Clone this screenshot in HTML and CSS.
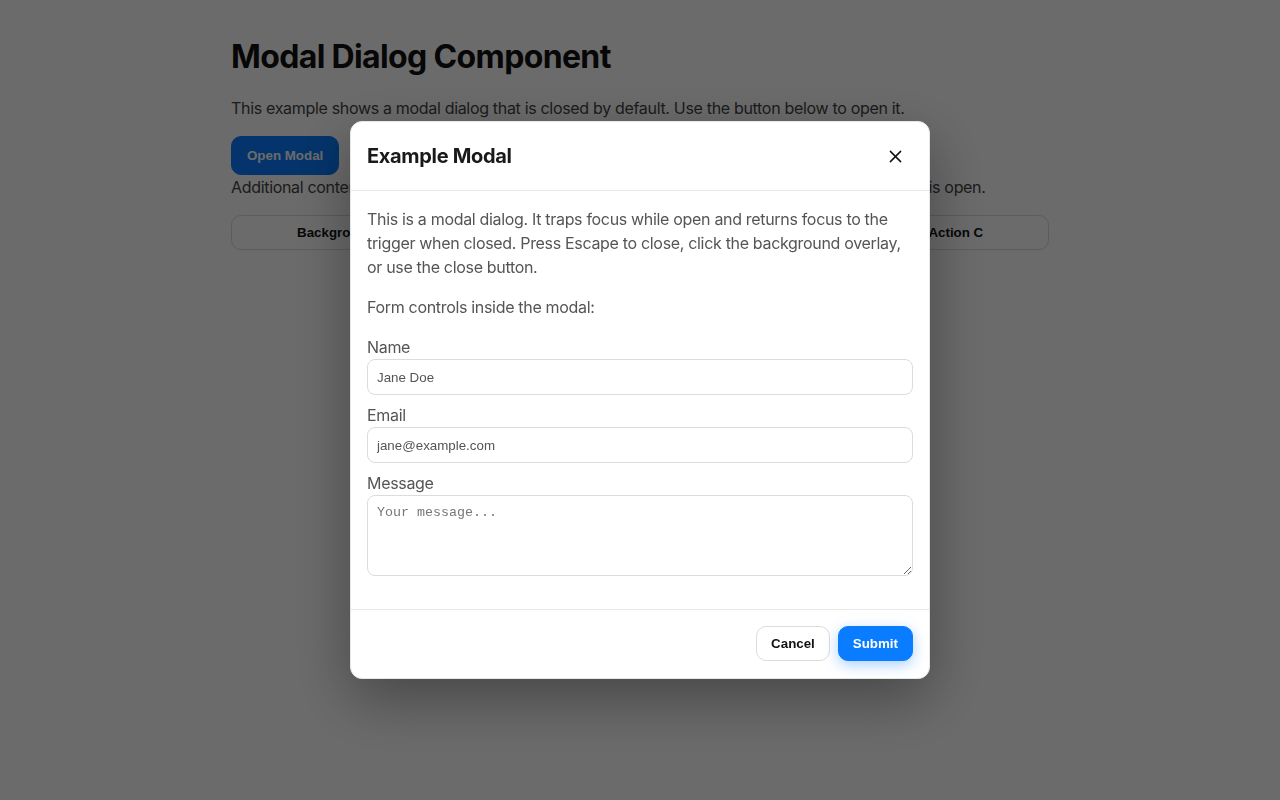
FILE: index.html
```html
<!DOCTYPE html>
<html lang="en">
<head>
<meta charset="utf-8">
<title>Modal Dialog Component</title>
<link rel="stylesheet" href="styles.css">
</head>
<body>
<main class="page">
  <h1 class="page-title">Modal Dialog Component</h1>
  <p class="intro">This example shows a modal dialog that is closed by default. Use the button below to open it.</p>
  <button class="btn btn-primary btn-open" type="button">Open Modal</button>
  <p class="after">Additional content behind the modal. The buttons below shouldn't be reachable while the modal is open.</p>
  <div class="bg-actions">
    <button class="btn bg-btn" type="button">Background Action A</button>
    <button class="btn bg-btn" type="button">Background Action B</button>
    <button class="btn bg-btn" type="button">Background Action C</button>
  </div>
</main>

<div class="overlay">
  <div class="modal" role="dialog" aria-modal="true" aria-labelledby="modal-title">
    <header class="modal-header">
      <h2 class="modal-title" id="modal-title">Example Modal</h2>
      <button class="close-btn" type="button" aria-label="Close">
        <svg width="14" height="14" viewBox="0 0 14 14" aria-hidden="true"><path d="M1.5 1.5 L12.5 12.5 M12.5 1.5 L1.5 12.5" stroke="#111" stroke-width="1.6" stroke-linecap="round" fill="none"/></svg>
      </button>
    </header>
    <div class="modal-body">
      <p class="body-text">This is a modal dialog. It traps focus while open and returns focus to the trigger when closed. Press Escape to close, click the background overlay, or use the close button.</p>
      <p class="body-text">Form controls inside the modal:</p>
      <div class="field">
        <label class="field-label" for="name">Name</label>
        <input class="field-input" id="name" type="text" value="Jane Doe">
      </div>
      <div class="field">
        <label class="field-label" for="email">Email</label>
        <input class="field-input" id="email" type="email" value="jane@example.com">
      </div>
      <div class="field">
        <label class="field-label" for="message">Message</label>
        <textarea class="field-input field-textarea" id="message" placeholder="Your message..."></textarea>
      </div>
    </div>
    <footer class="modal-footer">
      <button class="btn btn-secondary" type="button">Cancel</button>
      <button class="btn btn-primary btn-submit" type="button">Submit</button>
    </footer>
  </div>
</div>
</body>
</html>
```

FILE: styles.css
```css
* { box-sizing: border-box; }

html, body {
  margin: 0;
  padding: 0;
  background: #ffffff;
}

body {
  font-family: Inter, "Noto Sans", "Liberation Sans", sans-serif;
  color: #1a1a1a;
  font-size: 16px;
  line-height: 1.5;
  letter-spacing: -0.02em;
}

.page {
  max-width: 858px;
  margin: 0 auto;
  padding: 38px 20px;
}

.page-title {
  font-size: 32px;
  line-height: 38px;
  font-weight: 700;
  margin: 0 0 20px;
  color: #111;
  letter-spacing: -0.02em;
}

.intro {
  margin: 0 0 16px;
  color: #444;
}

.after {
  margin: 0;
  color: #444;
}

.btn {
  font-family: "Liberation Sans", Arial, sans-serif;
  font-size: 13.333px;
  font-weight: 700;
  line-height: 15px;
  letter-spacing: 0;
  border-radius: 10px;
  border: 1px solid #dcdcdc;
  background: #fff;
  color: #111;
  padding: 9px 14px;
  cursor: pointer;
}

.btn-primary {
  background: #0a7cff;
  border-color: #0a7cff;
  color: #fff;
}

.btn-open {
  padding: 11px 15px;
  display: block;
}

.bg-actions {
  display: flex;
  gap: 8px;
  margin-top: 16px;
}

.bg-btn {
  flex: 1 1 0;
  padding: 9px 12px;
}

.overlay {
  position: fixed;
  inset: 0;
  background: rgba(0, 0, 0, 0.58);
  display: flex;
  align-items: center;
  justify-content: center;
}

.modal {
  width: 580px;
  background: #fff;
  border-radius: 12px;
  border: 1px solid #e6e6e6;
  box-shadow: 0 20px 60px rgba(0, 0, 0, 0.35);
  display: flex;
  flex-direction: column;
}

.modal-header {
  display: flex;
  align-items: center;
  justify-content: space-between;
  padding: 16px 16px;
  border-bottom: 1px solid #e8e8e8;
}

.modal-title {
  margin: 0;
  font-size: 20px;
  line-height: 30px;
  font-weight: 700;
  color: #1a1a1a;
}

.close-btn {
  width: 36px;
  height: 36px;
  border: none;
  background: transparent;
  border-radius: 8px;
  display: flex;
  align-items: center;
  justify-content: center;
  padding: 0;
  cursor: pointer;
}

.close-btn svg {
  width: 13px;
  height: 13px;
}

.modal-body {
  padding: 16px 16px 33px;
}

.body-text {
  margin: 0 0 16px;
  color: #555;
}

.field {
  display: flex;
  flex-direction: column;
  margin-bottom: 8px;
}

.field:last-child {
  margin-bottom: 0;
}

.field-label {
  color: #555;
  font-size: 16px;
  line-height: 24px;
}

.field-input {
  width: 100%;
  font-family: "Liberation Sans", Arial, sans-serif;
  font-size: 13.333px;
  line-height: 15px;
  letter-spacing: 0;
  color: #555;
  padding: 9px 9px;
  border: 1px solid #dcdcdc;
  border-radius: 8px;
  background: #fff;
  height: 36px;
}

.field-textarea {
  font-family: "Liberation Mono", "Courier New", monospace;
  height: 81px;
  resize: vertical;
}

.field-textarea::placeholder {
  color: #777;
}

.modal-footer {
  display: flex;
  justify-content: flex-end;
  gap: 8px;
  padding: 16px 16px 17px;
  border-top: 1px solid #e8e8e8;
}

.btn-submit {
  box-shadow: 0 4px 14px rgba(10, 124, 255, 0.35);
}
```
